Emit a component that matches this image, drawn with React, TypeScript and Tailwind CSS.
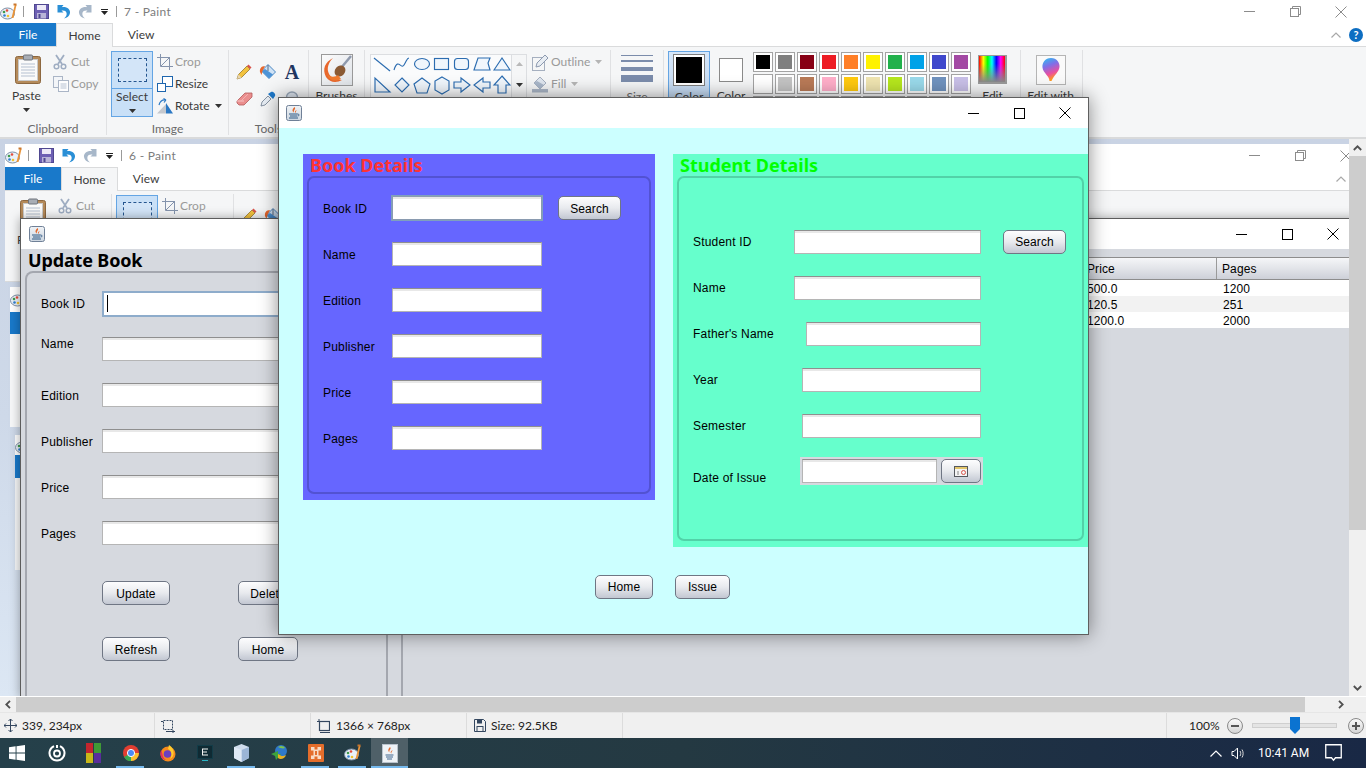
import React from "react";

const Ico = ({ w = 16, h = 16, children }: { w?: number; h?: number; children: React.ReactNode }) => (
  <svg width={w} height={h} viewBox={`0 0 ${w} ${h}`} className="block shrink-0">{children}</svg>
);

const PaintIcon = () => (
  <Ico w={18} h={18}>
    <ellipse cx="7.5" cy="10.5" rx="7" ry="5.5" fill="#eaf1f8" stroke="#7d8fa5" />
    <circle cx="4" cy="9" r="1.3" fill="#3f9a4c" /><circle cx="7" cy="7.5" r="1.3" fill="#e44c3a" />
    <circle cx="4.5" cy="12.5" r="1.3" fill="#2f7fd0" /><circle cx="8" cy="13" r="1.3" fill="#f2c230" />
    <path d="M15 1 L16.5 2 L13.5 15 L11.5 15 Z" fill="#e9943a" /><path d="M13.5 0.5h3v2h-3z" fill="#c9762c" />
  </Ico>
);
const SaveIcon = () => (
  <Ico w={15} h={15}>
    <rect x="0.5" y="0.5" width="14" height="14" fill="#6d5fb3" stroke="#4f4790" />
    <rect x="3" y="1" width="9" height="5" fill="#ece9f7" /><rect x="3" y="9" width="9" height="5.5" fill="#b9b4d8" /><rect x="4.5" y="10" width="2" height="4" fill="#4f4790" />
  </Ico>
);
const UndoIcon = ({ c = "#2a8fd6", flip = false }: { c?: string; flip?: boolean }) => (
  <Ico w={14} h={15}>
    <g transform={flip ? "translate(14,0) scale(-1,1)" : undefined}>
      <path d="M0.5 1 L6.5 1 L4.8 3.2 C10 2.5 13.5 5.5 13 9 C12.6 12 10 14 7 14.5 C9 13 10 11 9.6 9 C9.2 7 7 6.2 4.5 6.6 L6.5 8.5 L0.5 8.5 Z" fill={c} />
    </g>
  </Ico>
);
const Caret = ({ c = "#333" }: { c?: string }) => (
  <svg width="7" height="4" viewBox="0 0 7 4" className="block shrink-0"><path d="M0 0h7L3.5 4z" fill={c} /></svg>
);
const ClipboardIcon = () => (
  <Ico w={26} h={30}>
    <rect x="0.5" y="2.5" width="25" height="27" rx="2" fill="#b48a5a" stroke="#8c673f" />
    <rect x="3.5" y="5.5" width="19" height="21" fill="#fafafa" stroke="#c9c9c9" />
    <path d="M6 10h14M6 13h14M6 16h14M6 19h14M6 22h14" stroke="#b5c0d0" />
    <rect x="8.5" y="1" width="9" height="5" rx="1" fill="#a8adb5" stroke="#6f747c" />
  </Ico>
);
const ScissorsIcon = () => (
  <Ico w={14} h={16}>
    <path d="M3 1 L9 10 M11 1 L5 10" stroke="#9fadc2" strokeWidth="1.8" fill="none" />
    <circle cx="3.5" cy="12.5" r="2.3" fill="none" stroke="#9fadc2" strokeWidth="1.5" /><circle cx="10.5" cy="12.5" r="2.3" fill="none" stroke="#9fadc2" strokeWidth="1.5" />
  </Ico>
);
const CopyIcon = () => (
  <Ico w={16} h={16}>
    <rect x="0.5" y="0.5" width="9" height="11" fill="#f3f5f8" stroke="#aab5c6" /><rect x="5.5" y="4.5" width="10" height="11" fill="#fdfdfe" stroke="#aab5c6" />
    <path d="M7.5 8h6M7.5 10h6M7.5 12h6" stroke="#b7c2d2" />
  </Ico>
);
const CropIcon = () => (
  <Ico w={16} h={16}>
    <path d="M0 3.5h12.5V16 M3.5 0v12.5H16" stroke="#8493ac" fill="none" /><path d="M4 12L13 3" stroke="#8493ac" />
  </Ico>
);
const ResizeIcon = () => (
  <Ico w={16} h={16}>
    <rect x="5.5" y="0.5" width="10" height="10" fill="#fff" stroke="#1e66ae" /><rect x="0.5" y="7.5" width="8" height="8" fill="#fff" stroke="#1e66ae" />
  </Ico>
);
const RotateIcon = () => (
  <Ico w={16} h={16}>
    <path d="M0 15.5 L9 6 V15.5 Z" fill="#c4c8ce" /><path d="M9 5 L16 15.5 H9 Z" fill="#2b78c4" />
    <path d="M2 7 C3 3 6 1.5 9 2 M9 2 L6.5 0.5 M9 2 L7 4.5" stroke="#2b78c4" fill="none" strokeWidth="1.2" />
  </Ico>
);
const PencilIcon = () => (
  <Ico w={16} h={16}>
    <path d="M1 15 L2.5 10.5 L11 2 L14 5 L5.5 13.5 Z" fill="#f2c23e" stroke="#8a6a20" strokeWidth="0.7" /><path d="M11 2 L12.5 0.5 L15.5 3.5 L14 5 Z" fill="#d9534a" /><path d="M1 15 L2.5 10.5 L5.5 13.5Z" fill="#e8d5b0" />
  </Ico>
);
const BucketIcon = () => (
  <Ico w={18} h={18}>
    <path d="M9 1.5 L16.5 9 L10 15.5 L2.5 8 Z" fill="#cfe2f5" stroke="#4b87c2" /><path d="M2.5 8 L10 15.5 L14 11.5 L6 6Z" fill="#4d93d6" />
    <path d="M6 3 C2 3 0.5 6 1 9 L2.5 12 L3.5 8 Z" fill="#e8672c" /><path d="M9 2v6" stroke="#5a6b80" />
  </Ico>
);
const EraserIcon = () => (
  <Ico w={17} h={14}>
    <path d="M1 9 L9 1 H16 L16 5 L8 13 H3 L1 11Z" fill="#ea8e8e" stroke="#b25a5a" strokeWidth="0.8" /><path d="M1 9 L3 9 L8 9" stroke="#f8c4c4" /><path d="M5 9 L12 2" stroke="#f4b0b0" />
  </Ico>
);
const PickerIcon = () => (
  <Ico w={16} h={16}>
    <path d="M1 15 L2 11 L8 5 L11 8 L5 14 Z" fill="#e8eef5" stroke="#6b7a8e" strokeWidth="0.8" /><path d="M8 3 L13 8 L15 5 C16 3 13 0 11 1 Z" fill="#1f78c8" />
  </Ico>
);
const LensIcon = () => (
  <Ico w={16} h={16}>
    <circle cx="8" cy="6.5" r="5.5" fill="#dfe7f1" stroke="#9aa8ba" strokeWidth="1.4" /><path d="M8 12v4" stroke="#8b97a8" strokeWidth="2" />
  </Ico>
);
const BrushBox = () => (
  <Ico w={32} h={32}>
    <defs>
      <linearGradient id="brushbg" x1="0" y1="0" x2="1" y2="1"><stop offset="0" stopColor="#fbfbfb" /><stop offset="1" stopColor="#dfe3e8" /></linearGradient>
    </defs>
    <rect x="0.5" y="0.5" width="31" height="31" fill="url(#brushbg)" stroke="#9a9a9a" />
    <path d="M30 2 L20 14" stroke="#8f9aad" strokeWidth="2.5" />
    <ellipse cx="19" cy="17" rx="5" ry="6" transform="rotate(40 19 17)" fill="#8a5a34" />
    <path d="M12 4 C4 8 1 15 5 23 C9 29 16 29 21 26 C14 26 8 23 7 17 C6 12 9 7 12 4Z" fill="#e8672c" />
    <path d="M6 20 C9 24 15 23 17 21 L20 25 C14 28 8 27 6 20Z" fill="#ef7a2f" />
  </Ico>
);
const ShapesIcon = () => (
  <svg width="142" height="68" viewBox="0 0 142 68" className="block">
    <g stroke="#2b6cb0" strokeWidth="1.15" fill="#f0f6fc" strokeLinejoin="miter">
      <path d="M3 3 L19 16" fill="none" /><path d="M23 15 C27 2 30 15 33 10 S36 3 38 3" fill="none" />
      <ellipse cx="51" cy="9" rx="7.5" ry="5.5" /><rect x="63.5" y="3.5" width="14" height="11" /><rect x="83.5" y="3.5" width="14" height="11" rx="3" />
      <path d="M103 15 L107 3 L119 3 L117 8 L119 15Z" /><path d="M123 15 L131 3 L139 15Z" />
      <path d="M4 23 V37 H19Z" /><path d="M31 23 L38 30 L31 37 L24 30Z" /><path d="M51 23 L59 29 L56 38 L46 38 L43 29Z" /><path d="M71 22 L78 26 V35 L71 39 L64 35 V26Z" />
      <path d="M83 27 H90 V23 L99 30 L90 37 V33 H83Z" /><path d="M119 27 H112 V23 L103 30 L112 37 V33 H119Z" /><path d="M131 21 L139 30 H135 V38 H127 V30 H123Z" />
      <path d="M11 43 V50 H7 L11 58 L15 50 H11" /><path d="M31 43 L34 49 L40 50 L35 54 L31 60 L27 54 L22 50 L28 49Z" /><path d="M44 43 H58 V55 H44Z" /><path d="M64 43 H78 V55 H64Z" />
    </g>
  </svg>
);
const OutlineIcon = () => (
  <Ico w={17} h={17}>
    <rect x="0.5" y="3.5" width="12" height="13" fill="#f5f6f7" stroke="#a5afbf" /><path d="M4 13 L5 9 L13 1 L16 4 L8 12 Z" fill="#e8edf3" stroke="#8d9ab0" />
  </Ico>
);
const FillIcon = () => (
  <Ico w={17} h={17}>
    <path d="M8 1 L14 7 L8 13 L2 7 Z" fill="#dfe6ef" stroke="#a5afbf" /><path d="M2 7 L8 13 L12 9 L5 5Z" fill="#a9b7ca" /><rect x="0" y="13" width="16" height="3.5" fill="#aab5c6" />
  </Ico>
);
const P3DIcon = ({ id }: { id: string }) => (
  <svg width="30" height="30" viewBox="0 0 30 30" className="block">
    <defs>
      <linearGradient id={id} x1="0" y1="0" x2="0.3" y2="1">
        <stop offset="0" stopColor="#27c4f2" /><stop offset="0.4" stopColor="#7f6fe8" /><stop offset="0.75" stopColor="#ea4fa0" /><stop offset="1" stopColor="#ff9a1f" />
      </linearGradient>
    </defs>
    <rect x="0.5" y="0.5" width="29" height="29" fill="#fafafa" stroke="#b5b5b5" />
    <path d="M15 3 C21 3 24 8 23.5 12 C23 17 18 20 15.5 26 L13.5 26 C13.5 21 7 18 6.5 12.5 C6 8 9 3 15 3Z" fill={`url(#${id})`} />
  </svg>
);

const GroupLabel = ({ children }: { children: React.ReactNode }) => (
  <div className="h-[16px] flex items-center justify-center text-[12px] leading-none text-[#6a6a6a] whitespace-nowrap">{children}</div>
);

const Group = ({ w, label, children }: { w: string; label?: string; children: React.ReactNode }) => (
  <div className={`${w} shrink-0 h-full flex flex-col`}>
    <div className="h-[70px] flex">{children}</div>
    <GroupLabel>{label ?? ""}</GroupLabel>
  </div>
);

const Sep = () => <div className="w-px h-[85px] mt-[-1px] bg-[#e0e1e3] shrink-0" />;

const row1 = ["#000000", "#7f7f7f", "#880015", "#ed1c24", "#ff7f27", "#fff200", "#22b14c", "#00a2e8", "#3f48cc", "#a349a4"];
const row2 = ["#ffffff", "#c3c3c3", "#b97a57", "#ffaec9", "#ffc90e", "#efe4b0", "#b5e61d", "#99d9ea", "#7092be", "#c8bfe7"];
const row3 = Array.from({ length: 10 }, () => "#f5f6f7");

const PaintFrame = ({ title, id, help = true }: { title: string; id: string; help?: boolean }) => (
  <div className="w-[1366px] bg-white [font-family:'Lato',sans-serif]">
    <div className="h-[23px] flex items-center">
      <div className="w-[18px]"><PaintIcon /></div>
      <div className="w-px h-[11px] bg-[#9a9a9a] ml-[5px]" />
      <div className="ml-[10px]"><SaveIcon /></div>
      <div className="ml-[8px]"><UndoIcon /></div>
      <div className="ml-[7px]"><UndoIcon c="#a7b7c9" flip /></div>
      <div className="ml-[9px] flex flex-col gap-[1px]"><div className="w-[7px] h-px bg-[#222]" /><Caret c="#222" /></div>
      <div className="w-px h-[11px] bg-[#9a9a9a] ml-[8px]" />
      <div className="ml-[7px] text-[12px] tracking-[0.3px] text-[#7c7c7c] whitespace-nowrap">{title}</div>
      <div className="ml-auto mr-[2px] flex items-center">
        <div className="w-[46px] flex justify-center"><svg width="11" height="11" viewBox="0 0 11 11"><path d="M0 5.500h11" stroke="#8c8c8c" /></svg></div>
        <div className="w-[46px] flex justify-center">
          <svg width="11" height="11" viewBox="0 0 11 11"><path d="M2.5 2.5V.5h8v8h-2" fill="none" stroke="#8c8c8c" /><rect x=".5" y="2.5" width="8" height="8" fill="none" stroke="#8c8c8c" /></svg>
        </div>
        <div className="w-[46px] flex justify-center">
          <svg width="12" height="12" viewBox="0 0 12 12"><path d="M.5.5l11 11M11.5.5l-11 11" stroke="#8c8c8c" /></svg>
        </div>
      </div>
    </div>
    <div className="h-[24px] flex items-stretch border-b border-[#dadbdc] text-[12px]">
      <div className="w-[56px] bg-[#1979ca] text-white flex items-center justify-center">File</div>
      <div className="w-[57px] h-[24px] bg-[#f5f6f7] border border-b-0 border-[#dadbdc] text-[#3b3b3b] flex items-center justify-center">Home</div>
      <div className="w-[56px] text-[#3b3b3b] flex items-center justify-center">View</div>
      <div className="ml-auto flex items-center gap-[8px] mr-[3px]">
        <svg width="10" height="6" viewBox="0 0 10 6"><path d="M.5 5.5L5 1l4.5 4.5" fill="none" stroke="#a8a8a8" strokeWidth="1.2" /></svg>
        {help ? <div className="w-[14px] h-[14px] rounded-full bg-[#0d6ec2] text-white text-[11px] font-bold flex items-center justify-center leading-none">?</div> : <div className="w-[14px]" />}
      </div>
    </div>
    <div className="h-[91px] flex bg-[#f5f6f7] border-b border-[#d9dadb] pt-[4px] text-[12px] text-[#3b3b3b]">
      <Group w="w-[106px]" label="Clipboard">
        <div className="w-[53px] flex flex-col items-center">
          <div className="mt-[3px] ml-[2px]"><ClipboardIcon /></div>
          <div className="leading-none mt-[6px]">Paste</div>
          <div className="mt-[6px]"><Caret /></div>
        </div>
        <div className="flex flex-col text-[#9a9a9a]">
          <div className="h-[22px] flex items-center gap-[4px]"><ScissorsIcon /><span>Cut</span></div>
          <div className="h-[22px] flex items-center gap-[2px]"><CopyIcon /><span>Copy</span></div>
        </div>
      </Group>
      <Sep />
      <Group w="w-[121px]" label="Image">
        <div className="ml-[4px] w-[42px] h-[66px] bg-[#c9e0f7] border border-[#64a5e4] flex flex-col items-center">
          <div className="w-full h-[37px] border-b border-[#64a5e4] flex items-center justify-center">
            <div className="w-[29px] h-[24px] border border-dashed border-[#24558f] bg-[#d3e5f8]" />
          </div>
          <div className="leading-none mt-[2px]">Select</div>
          <div className="mt-[6px]"><Caret /></div>
        </div>
        <div className="ml-[4px] flex flex-col">
          <div className="h-[22px] flex items-center gap-[2px] text-[#9a9a9a]"><CropIcon /><span>Crop</span></div>
          <div className="h-[22px] flex items-center gap-[2px]"><ResizeIcon /><span>Resize</span></div>
          <div className="h-[22px] flex items-center gap-[2px]"><RotateIcon /><span>Rotate</span><span className="ml-[3px]"><Caret /></span></div>
        </div>
      </Group>
      <Sep />
      <Group w="w-[79px]" label="Tools">
        <div className="ml-[3px] mt-[7px] grid grid-cols-[24px_24px_24px] grid-rows-[27px_27px] items-center justify-items-center">
          <PencilIcon /><BucketIcon />
          <span className="[font-family:'Liberation_Serif',serif] font-bold text-[20px] leading-none text-[#1f3560]">A</span>
          <EraserIcon /><PickerIcon /><LensIcon />
        </div>
      </Group>
      <Sep />
      <Group w="w-[55px]" label="">
        <div className="w-full flex flex-col items-center">
          <div className="mt-[3px]"><BrushBox /></div>
          <div className="mt-[4px] leading-none">Brushes</div>
        </div>
      </Group>
      <Sep />
      <Group w="w-[245px]" label="">
        <div className="ml-[5px] mt-[3px] w-[142px] h-[66px] bg-[#fafbfc] border border-[#dcdee1] overflow-hidden"><ShapesIcon /></div>
        <div className="w-[15px] h-[66px] mt-[3px] border border-l-0 border-[#dcdee1] flex flex-col items-center gap-[17px] pt-[7px]">
          <svg width="7" height="4" viewBox="0 0 7 4"><path d="M0 4h7L3.5 0z" fill="#b9b9b9" /></svg>
          <Caret />
        </div>
        <div className="ml-[5px] flex flex-col text-[#9a9a9a]">
          <div className="h-[22px] flex items-center gap-[2px]"><OutlineIcon /><span>Outline</span><span className="ml-[3px]"><Caret c="#b5b5b5" /></span></div>
          <div className="h-[22px] flex items-center gap-[2px]"><FillIcon /><span>Fill</span><span className="ml-[3px]"><Caret c="#b5b5b5" /></span></div>
        </div>
      </Group>
      <Sep />
      <Group w="w-[52px]" label="">
        <div className="w-full flex flex-col items-center text-[#6a6a6a]">
          <div className="mt-[4px] w-[32px] flex flex-col">
            <div className="h-px bg-[#7b8cab]" /><div className="h-[2px] mt-[4px] bg-[#7b8cab]" /><div className="h-[4px] mt-[5px] bg-[#7b8cab]" /><div className="h-[7px] mt-[4px] bg-[#7b8cab]" />
          </div>
          <div className="mt-[9px] leading-none">Size</div>
        </div>
      </Group>
      <Sep />
      <Group w="w-[356px]" label="">
        <div className="ml-[4px] w-[42px] h-[70px] bg-linear-to-b from-[#d7e7f9] to-[#b9d3ef] border border-[#64a5e4] flex flex-col items-center">
          <div className="mt-[2px] w-[32px] h-[32px] border border-[#7f7f7f] p-[2px] bg-white"><div className="w-full h-full bg-black" /></div>
          <div className="mt-[5px] leading-none">Color</div>
        </div>
        <div className="ml-[9px] w-[24px] flex flex-col items-center">
          <div className="mt-[7px] w-[24px] h-[24px] border border-[#8a8a8a] bg-white shrink-0" />
          <div className="mt-[8px] leading-none">Color</div>
        </div>
        <div className="ml-[10px] mt-[1px] grid grid-cols-[repeat(10,20px)] gap-[2px] h-[64px]">
          {[...row1, ...row2, ...row3].map((c, i) => (
            <div key={i} className="w-[20px] h-[20px] border border-[#a3a3a3] p-[2px] bg-white"><div className="w-full h-full" style={{ background: c }} /></div>
          ))}
        </div>
        <div className="ml-[7px] w-[29px] shrink-0 flex flex-col items-center">
          <div className="mt-[4px] w-[29px] h-[29px] border border-[#9a9a9a] border-b-2 border-r-2 bg-[linear-gradient(to_bottom,transparent_30%,#8a8a8a_100%),linear-gradient(to_right,#f00,#ff0,#0f0,#0ff,#00f,#f0f,#f00)]" />
          <div className="mt-[6px] leading-none">Edit</div>
        </div>
      </Group>
      <Sep />
      <Group w="w-[61px]" label="">
        <div className="w-full flex flex-col items-center">
          <div className="mt-[4px] mr-[2px]"><P3DIcon id={id} /></div>
          <div className="mt-[5px] mr-[2px] leading-none whitespace-nowrap">Edit with</div>
        </div>
      </Group>
      <Sep />
    </div>
  </div>
);

const JavaIcon = () => (
  <Ico w={16} h={16}>
    <defs>
      <linearGradient id="javabg" x1="0" y1="0" x2="0" y2="1"><stop offset="0" stopColor="#f0f3f6" /><stop offset="1" stopColor="#cdd6e0" /></linearGradient>
    </defs>
    <rect x="0.5" y="0.5" width="15" height="15" rx="2" fill="url(#javabg)" stroke="#6f8097" />
    <path d="M8.500 2 C10.500 4 7 5 8 7.500 C5.500 6 6.500 4 8.500 2Z M10.500 5 C10.500 6.500 9 7 9.800 8 C8.300 7.500 8.800 5.800 10.500 5Z" fill="#e2682c" />
    <path d="M3 9h8.500M4 11h7M3 13h9" stroke="#2f5a86" />
    <path d="M11.500 9c2 0 2 2 0 2" stroke="#2f5a86" fill="none" />
  </Ico>
);

const Btn = ({ w, low, children }: { w: string; low?: boolean; children: React.ReactNode }) => (
  <button className={`${w} h-[24px] shrink-0 rounded-[5px] border border-[#6f7684] bg-linear-to-b from-[#fdfdfe] via-[#e8eaee] to-[#c2c7d2] text-[12px] leading-none tracking-[0.1px] text-black flex items-center justify-center ${low ? "pt-[2px]" : ""}`}>{children}</button>
);

const Field = ({ w, focus }: { w: string; focus?: boolean }) => (
  <div className={`${w} h-[24px] shrink-0 bg-white border shadow-[inset_0_2px_0_#e8e8e8] ${focus ? "border-[#8a9bb0] outline outline-[#7fa0bd]" : "border-[#b5b5b5] border-t-[#8f8f8f]"}`} />
);

const Cal = () => (
  <svg width="14" height="11" viewBox="0 0 14 11">
    <rect x=".5" y=".5" width="13" height="10" fill="#f4f4f4" stroke="#55585e" />
    <rect x="1" y="1" width="12" height="2" fill="#e2c56a" /><circle cx="9.500" cy="6.500" r="2" fill="none" stroke="#d9534a" /><path d="M4 5v4" stroke="#888" />
  </svg>
);

const Label = ({ w, low, children }: { w: string; low?: boolean; children: React.ReactNode }) => (
  <div className={`${w} shrink-0 text-[12px] leading-[14px] tracking-[0.2px] text-black whitespace-nowrap ${low ? "mt-[2px]" : ""}`}>{children}</div>
);

const Title = ({ color, children }: { color: string; children: React.ReactNode }) => (
  <div className={`h-[22px] pl-[7px] text-[18px] leading-[23px] font-bold [font-family:'Noto_Sans',sans-serif] whitespace-nowrap ${color}`}>{children}</div>
);

const JavaCtl = () => (
  <div className="ml-auto flex items-center">
    <div className="w-[46px] flex justify-center"><svg width="11" height="11" viewBox="0 0 11 11"><path d="M0 5.500h11" stroke="#000" /></svg></div>
    <div className="w-[46px] flex justify-center"><svg width="11" height="11" viewBox="0 0 11 11"><rect x=".5" y=".5" width="10" height="10" fill="none" stroke="#000" /></svg></div>
    <div className="w-[46px] flex justify-center"><svg width="12" height="12" viewBox="0 0 12 12"><path d="M.5.5l11 11M11.5.5l-11 11" stroke="#000" /></svg></div>
  </div>
);

const UpdateWindow = () => (
  <div className="absolute left-[20px] top-[79px] w-[1340px] h-[480px] border border-[#5c5c5c] bg-[#d6d9df] [font-family:'Liberation_Sans',sans-serif] shadow-[0_0_10px_rgba(0,0,0,0.35)]">
    <div className="h-[30px] bg-white flex items-center pl-[8px] pr-[3px]">
      <JavaIcon />
      <JavaCtl />
    </div>
    <div className="flex h-[450px]">
      <div className="w-[367px] shrink-0 flex flex-col">
        <div className="tracking-[-0.15px]"><Title color="text-black">Update Book</Title></div>
        <div className="ml-[4px] flex-1 rounded-tl-[8px] border-2 border-b-0 border-[#a4a7af] pl-[14px] pt-[18px] flex flex-col">
          <div className="h-[26px] flex items-center"><Label w="w-[61px]">Book ID</Label><div className="relative w-[250px] h-[26px] bg-white border-2 border-[#8eaccb]"><div className="absolute left-[3px] top-[2px] w-px h-[17px] bg-black" /></div></div>
          <div className="mt-[20px] h-[24px] flex"><Label w="w-[61px]">Name</Label><Field w="w-[250px]" /></div>
          <div className="mt-[22px] h-[24px] flex items-center"><Label low w="w-[61px]">Edition</Label><Field w="w-[250px]" /></div>
          <div className="mt-[22px] h-[24px] flex items-center"><Label low w="w-[61px]">Publisher</Label><Field w="w-[250px]" /></div>
          <div className="mt-[22px] h-[24px] flex items-center"><Label low w="w-[61px]">Price</Label><Field w="w-[250px]" /></div>
          <div className="mt-[22px] h-[24px] flex items-center"><Label low w="w-[61px]">Pages</Label><Field w="w-[250px]" /></div>
          <div className="mt-[36px] ml-[61px] flex gap-[68px]"><Btn low w="w-[68px]">Update</Btn><Btn low w="w-[60px]">Delete</Btn></div>
          <div className="mt-[32px] ml-[61px] flex gap-[68px]"><Btn low w="w-[68px]">Refresh</Btn><Btn low w="w-[60px]">Home</Btn></div>
        </div>
      </div>
      <div className="ml-[13px] flex-1 border-l-2 border-[#a4a7af] mt-[22px]">
        <div className="mt-[-14px] text-[12px] tracking-[0.1px] text-black">
          <div className="h-[23px] flex items-center border-y border-y-[#8d8d8d] bg-linear-to-b from-[#f5f6f8] via-[#e2e4e9] to-[#cdd0d8]">
            <div className="w-[684px] shrink-0" />
            <div className="w-[130px] h-full flex items-center border-r border-[#9a9a9a] shrink-0">Price</div>
            <div className="pl-[5px]">Pages</div>
          </div>
          {[["500.0", "1200"], ["120.5", "251"], ["1200.0", "2000"]].map((r, i) => (
            <div key={i} className={`h-[16px] flex items-center pt-[2px] ${i === 1 ? "bg-[#f2f2f2]" : "bg-white"}`}>
              <div className="w-[684px] shrink-0" />
              <div className="w-[130px] shrink-0">{r[0]}</div>
              <div className="pl-[6px]">{r[1]}</div>
            </div>
          ))}
        </div>
      </div>
    </div>
  </div>
);

const Canvas = () => (
  <div className="relative w-[1349px] h-[557px] overflow-hidden bg-linear-to-b from-[#c9d3e4] via-[#ced9e9] to-[#dce7f4]">
    <div className="absolute left-[5px] top-[5px]"><PaintFrame title="6 - Paint" id="p3d2" help={false} /></div>
    <div className="absolute left-[10px] top-[148px] w-[20px] h-[140px] bg-[#f7f8f9] flex flex-col">
      <div className="h-[25px] bg-white pt-[3px]"><PaintIcon /></div>
      <div className="h-[22px] bg-[#1979ca]" />
    </div>
    <div className="absolute left-[15px] top-[296px] w-[15px] h-[135px] bg-[#f7f8f9] flex flex-col">
      <div className="h-[20px] bg-white pt-[2px]"><PaintIcon /></div>
      <div className="h-[23px] bg-[#1979ca]" />
    </div>
    <UpdateWindow />
  </div>
);

const VScroll = () => (
  <div className="w-[17px] h-[557px] bg-[#f0f0f0] flex flex-col items-center">
    <div className="h-[17px] flex items-center">
      <svg width="9" height="6" viewBox="0 0 9 6"><path d="M.8 5L4.5 1.3 8.2 5" fill="none" stroke="#505050" strokeWidth="1.8" /></svg>
    </div>
    <div className="w-full h-[374px] bg-[#cdcdcd]" />
    <div className="mt-auto h-[17px] flex items-center">
      <svg width="9" height="6" viewBox="0 0 9 6"><path d="M.8 1L4.5 4.7 8.2 1" fill="none" stroke="#505050" strokeWidth="1.8" /></svg>
    </div>
  </div>
);

const HScroll = () => (
  <div className="h-[16px] bg-[#f0f0f0] flex items-center border-t border-white">
    <div className="w-[16px] flex justify-center">
      <svg width="6" height="9" viewBox="0 0 6 9"><path d="M5 .8L1.3 4.5 5 8.2" fill="none" stroke="#505050" strokeWidth="1.8" /></svg>
    </div>
    <div className="w-[1289px] h-full bg-[#cdcdcd]" />
    <div className="ml-[33px]">
      <svg width="6" height="9" viewBox="0 0 6 9"><path d="M1 .8L4.7 4.5 1 8.2" fill="none" stroke="#505050" strokeWidth="1.8" /></svg>
    </div>
  </div>
);

const StatusBar = () => (
  <div className="h-[26px] bg-[#f0f0f0] flex items-center text-[12px] text-[#222] border-t border-[#e6e6e6] [font-family:'Lato',sans-serif]">
    <div className="w-[155px] h-full flex items-center border-r border-[#dcdcdc] pl-[4px] gap-[5px]">
      <svg width="13" height="13" viewBox="0 0 13 13"><path d="M6.5 0v13M0 6.5h13M4.5 2l2-2 2 2M4.5 11l2 2 2-2M2 4.5l-2 2 2 2M11 4.5l2 2-2 2" fill="none" stroke="#33465f" /></svg>
      <span className="whitespace-nowrap">339, 234px</span>
    </div>
    <div className="w-[156px] h-full flex items-center border-r border-[#dcdcdc] pl-[6px]">
      <svg width="14" height="14" viewBox="0 0 14 14"><rect x="2.5" y="1.5" width="9" height="9" fill="none" stroke="#33465f" strokeDasharray="2 1" /><path d="M0 2.5h2M5 12.5h9M12 11v3" stroke="#33465f" /></svg>
    </div>
    <div className="w-[156px] h-full flex items-center border-r border-[#dcdcdc] pl-[6px] gap-[6px]">
      <svg width="13" height="14" viewBox="0 0 13 14"><rect x="2.5" y="2.5" width="10" height="9" fill="none" stroke="#33465f" strokeWidth="1.2" /><path d="M0 2.5h2M2 0v2M3 13.5h10" stroke="#33465f" /></svg>
      <span className="whitespace-nowrap">1366 × 768px</span>
    </div>
    <div className="w-[156px] h-full flex items-center border-r border-[#dcdcdc] pl-[7px] gap-[5px]">
      <svg width="12" height="13" viewBox="0 0 12 13"><path d="M.5.5h9l2 2v10H.5z" fill="none" stroke="#33465f" /><rect x="3" y="1" width="5" height="3.5" fill="#33465f" /><rect x="3" y="7.5" width="6" height="5" fill="none" stroke="#33465f" /></svg>
      <span className="whitespace-nowrap">Size: 92.5KB</span>
    </div>
    <div className="w-[544px] h-full border-r border-[#dcdcdc]" />
    <div className="flex-1 flex items-center pl-[22px]">
      <span>100%</span>
      <div className="ml-[7px] w-[16px] h-[16px] rounded-full border border-[#8a8a8a] bg-linear-to-b from-[#fafafa] to-[#d5d5d5] flex items-center justify-center"><div className="w-[8px] h-[2px] bg-[#555]" /></div>
      <div className="relative ml-[9px] w-[85px] h-[5px] bg-[#e4e4e4] border border-[#cfcfcf]">
        <svg className="absolute left-[37px] top-[-7px]" width="10" height="17" viewBox="0 0 10 17"><path d="M0 0h10v12l-5 5-5-5z" fill="#0b73d1" /></svg>
      </div>
      <div className="ml-[11px] w-[16px] h-[16px] rounded-full border border-[#8a8a8a] bg-linear-to-b from-[#fafafa] to-[#d5d5d5] flex items-center justify-center relative"><div className="w-[8px] h-[2px] bg-[#555]" /><div className="absolute w-[2px] h-[8px] bg-[#555]" /></div>
    </div>
  </div>
);

const TaskIcon = ({ line, active, children }: { line?: boolean; active?: boolean; children: React.ReactNode }) => (
  <div className={`relative h-full w-[37px] shrink-0 flex items-center justify-center ${active ? "bg-[#4f6068]" : ""}`}>
    {children}
    {line && <div className={`absolute bottom-0 h-[2px] bg-[#76b9ed] ${active ? "left-0 w-full" : "left-[4px] w-[28px]"}`} />}
  </div>
);

const Taskbar = () => (
  <div className="h-[30px] flex items-center bg-linear-to-r from-[#25404a] via-[#243942] to-[#192845] [font-family:'Roboto',sans-serif] text-white">
    <div className="w-[38px] h-full flex items-center justify-center pr-[4px]">
      <svg width="16" height="16" viewBox="0 0 16 16" fill="#fff"><path d="M0 2.3l6.6-1v6.3H0zM7.5 1.2L16 0v7.6H7.5zM0 8.4h6.6v6.3l-6.6-1zM7.5 8.4H16V16l-8.500-1.200z" /></svg>
    </div>
    <TaskIcon>
      <svg width="18" height="18" viewBox="0 0 18 18"><path d="M6 2.100A7.500 7.500 0 1 0 12 2.100" fill="none" stroke="#fff" strokeWidth="2" /><path d="M9 1v3" stroke="#fff" strokeWidth="2" /><circle cx="9" cy="9.500" r="3" fill="none" stroke="#fff" strokeWidth="1.800" /></svg>
    </TaskIcon>
    <TaskIcon>
      <svg width="15" height="20" viewBox="0 0 15 20"><rect width="7" height="10" fill="#c4262e" /><rect x="8" width="7" height="10" fill="#3f9a35" /><rect y="10" width="7" height="10" fill="#c9b819" /><rect x="8" y="10" width="7" height="10" fill="#5a2d9c" /></svg>
    </TaskIcon>
    <TaskIcon line>
      <svg width="16" height="16" viewBox="0 0 16 16"><circle cx="8" cy="8" r="8" fill="#e23e31" /><path d="M8 8L1 12A8 8 0 0 0 10 15.8Z" fill="#34a853" /><path d="M8 8L16 8A8 8 0 0 1 8 16Z" fill="#fbc02d" /><circle cx="8" cy="8" r="3.6" fill="#4a8af4" stroke="#fff" /></svg>
    </TaskIcon>
    <TaskIcon>
      <svg width="18" height="18" viewBox="0 0 18 18"><circle cx="9" cy="10" r="7.500" fill="#f78a1c" /><path d="M10 1 C16 4 16 13 11 15 C14 10 11 6 9 5Z" fill="#ffcb2e" /><circle cx="8.500" cy="10" r="3.800" fill="#6b3fc0" /><path d="M2 6 C4 9 3 14 7 16 C3 16 0 12 2 6Z" fill="#e2315c" /></svg>
    </TaskIcon>
    <TaskIcon>
      <svg width="16" height="17" viewBox="0 0 16 17"><rect x=".5" y=".5" width="15" height="13" fill="#0f2a33" stroke="#123c48" /><path d="M5 3.500h6v1H6v2h4v1H6v2h5v1H5z" fill="#f4f4f4" /><path d="M5 15.500h6" stroke="#2ab6c6" /></svg>
    </TaskIcon>
    <TaskIcon line>
      <svg width="15" height="18" viewBox="0 0 15 18"><path d="M7.500 0L15 3v11l-7.500 4L0 14V3z" fill="#cfdcec" /><path d="M7.500 6L15 3v11l-7.500 4z" fill="#9bb5d6" /><path d="M7.500 6L0 3v11l7.500 4z" fill="#dfe9f5" /></svg>
    </TaskIcon>
    <TaskIcon>
      <svg width="18" height="18" viewBox="0 0 18 18"><circle cx="11" cy="7" r="6" fill="#2f79c9" /><path d="M8 3c3-2 6-1 7 1-2 1-5 0-7-1z" fill="#7fc24c" /><path d="M1 10l7-3v3h3l-5 6-1-4z" fill="#3da33c" /><path d="M8 10c3 2 5 3 8 1-1 4-6 5-8 3z" fill="#e6b023" /></svg>
    </TaskIcon>
    <TaskIcon line>
      <svg width="16" height="18" viewBox="0 0 16 18"><rect width="16" height="18" rx="1" fill="#e46d2b" /><path d="M3 3h3.500v2.500H9.500V3H13v3.500h-2.500v5H13V15H9.500v-2.500H6.500V15H3v-3.500h2.500v-5H3z" fill="#f7dcc6" /><rect x="7" y="7" width="2" height="4" fill="#e46d2b" /></svg>
    </TaskIcon>
    <TaskIcon line><PaintIcon /></TaskIcon>
    <TaskIcon line active>
      <svg width="16" height="19" viewBox="0 0 16 19"><rect x=".5" y=".5" width="15" height="18" fill="#eef2f6" stroke="#b8c2cc" /><path d="M8 3C10 5 6.500 6 7.500 8.500C5.500 7 6 5 8 3Z M10.500 6C10.500 7.500 8.800 8 9.500 9.500C8 9 8.500 7 10.500 6Z" fill="#e2682c" /><path d="M3.500 11h8M4 13h7M5 15h5" stroke="#41678f" /></svg>
    </TaskIcon>
    <div className="ml-auto flex items-center h-full">
      <svg width="12" height="7" viewBox="0 0 12 7"><path d="M.5 6.500L6 1l5.500 5.500" fill="none" stroke="#fff" strokeWidth="1.2" /></svg>
      <svg className="ml-[9px]" width="15" height="15" viewBox="0 0 15 15"><path d="M1 5.500h2L6.500 2v11L3 9.500H1z" fill="none" stroke="#fff" /><path d="M9 5c1 1.500 1 3.500 0 5M11 3.500c1.500 2.500 1.500 5.500 0 8" fill="none" stroke="#ddd" /></svg>
      <span className="ml-[12px] w-[54px] text-[12px] whitespace-nowrap">10:41 AM</span>
      <svg className="ml-[13px] mr-[24px]" width="17" height="18" viewBox="0 0 17 18"><path d="M.75.75h15.500v13H10.500l-2 2.500-2-2.500H.75z" fill="none" stroke="#fff" strokeWidth="1.3" /></svg>
    </div>
  </div>
);

const FrontWindow = () => (
  <div className="absolute left-[278px] top-[97px] w-[811px] h-[538px] border border-[#5f5f5f] bg-[#ccffff] [font-family:'Liberation_Sans',sans-serif] shadow-[0_0_18px_rgba(0,0,0,0.45)]">
    <div className="h-[30px] bg-white flex items-center pl-[7px]"><JavaIcon /><JavaCtl /></div>
    <div className="pt-[26px]">
      <div className="flex items-start pl-[24px]">
        <div className="w-[352px] h-[346px] bg-[#6666ff] shrink-0">
          <Title color="text-[#ff3333]">Book Details</Title>
          <div className="ml-[4px] w-[344px] h-[318px] rounded-[7px] border-2 border-[#5252d2] pl-[14px] pt-[18px] flex flex-col gap-[22px]">
            <div className="h-[24px] flex items-center"><Label low w="w-[69px]">Book ID</Label><Field w="w-[150px]" focus /><div className="ml-[16px]"><Btn low w="w-[63px]">Search</Btn></div></div>
            {["Name", "Edition", "Publisher", "Price", "Pages"].map((t) => (
              <div key={t} className="h-[24px] flex items-center"><Label low w="w-[69px]">{t}</Label><Field w="w-[150px]" /></div>
            ))}
          </div>
        </div>
        <div className="ml-[18px] w-[415px] h-[393px] bg-[#66ffcc] shrink-0">
          <Title color="text-[#00ff00]">Student Details</Title>
          <div className="ml-[4px] w-[407px] h-[365px] rounded-[7px] border-2 border-[#52d2a8] pl-[14px] pt-[52px] flex flex-col gap-[22px]">
            <div className="h-[24px] flex items-center"><Label w="w-[101px]">Student ID</Label><Field w="w-[187px]" /><div className="ml-[22px]"><Btn w="w-[63px]">Search</Btn></div></div>
            <div className="h-[24px] flex items-center"><Label w="w-[101px]">Name</Label><Field w="w-[187px]" /></div>
            <div className="h-[24px] flex items-center"><Label w="w-[113px]">Father's Name</Label><Field w="w-[175px]" /></div>
            <div className="h-[24px] flex items-center"><Label w="w-[109px]">Year</Label><Field w="w-[179px]" /></div>
            <div className="h-[24px] flex items-center"><Label w="w-[109px]">Semester</Label><Field w="w-[179px]" /></div>
            <div className="-mt-[3px] h-[28px] flex items-start">
              <div className="pt-[14px]"><Label w="w-[107px]">Date of Issue</Label></div>
              <div className="w-[183px] h-[28px] bg-[#d6d9df] flex items-center pl-[2px] gap-[4px]">
                <Field w="w-[135px]" />
                <button className="w-[40px] h-[24px] rounded-[5px] border border-[#6f7684] bg-linear-to-b from-[#fdfdfe] via-[#e8eaee] to-[#c2c7d2] flex items-center justify-center"><Cal /></button>
              </div>
            </div>
          </div>
        </div>
      </div>
      <div className="mt-[28px] ml-[316px] flex gap-[22px]"><Btn w="w-[58px]">Home</Btn><Btn w="w-[55px]">Issue</Btn></div>
    </div>
  </div>
);

export default function App() {
  return (
    <div className="relative w-[1366px] h-[768px] overflow-hidden bg-white">
      <PaintFrame title="7 - Paint" id="p3d1" />
      <div className="h-px bg-[#d9dadb]" />
      <div className="flex">
        <Canvas />
        <VScroll />
      </div>
      <HScroll />
      <StatusBar />
      <Taskbar />
      <FrontWindow />
    </div>
  );
}
